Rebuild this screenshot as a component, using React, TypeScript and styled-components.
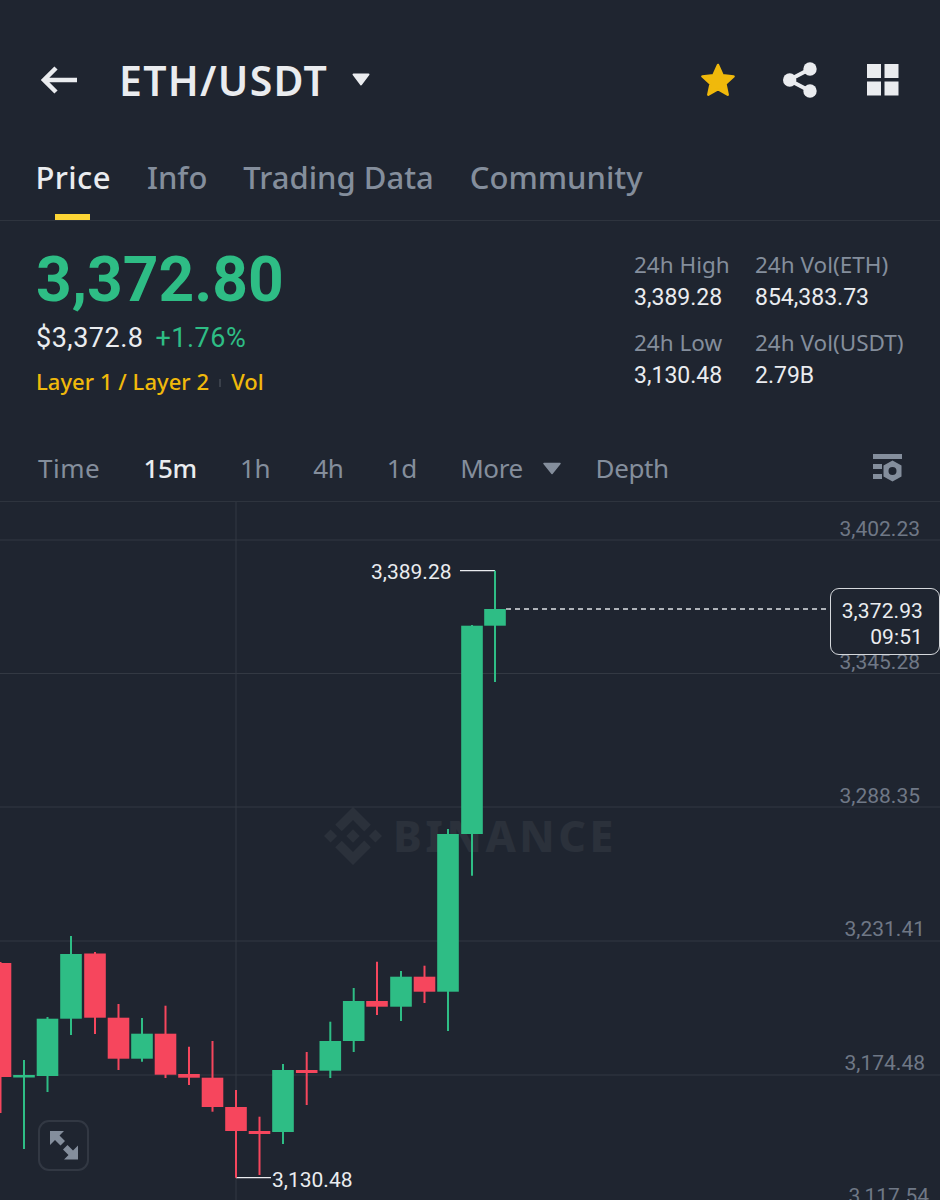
import React from 'react'
import styled, { createGlobalStyle } from 'styled-components'

const BG = '#1f2530'
const GREEN = '#2ebd85'
const RED = '#f6465d'
const WHITE = '#eaecef'
const MUTED = '#848e9c'
const LINE = '#2e343e'
const GRID = '#333943'
const TEXT_FONT = `"Noto Sans", "Open Sans", sans-serif`
const NUM_FONT = `Roboto, "Noto Sans", sans-serif`

const GlobalStyle = createGlobalStyle`
  html, body {
    margin: 0;
    background: ${BG};
  }
`

const Page = styled.div`
  width: 940px;
  height: 1200px;
  overflow: hidden;
  background: ${BG};
  color: ${WHITE};
  font-family: ${TEXT_FONT};
`

const Header = styled.header`
  display: flex;
  align-items: center;
  height: 56px;
  padding: 52px 41px 0 41px;
`

const Title = styled.h1`
  margin: 0 0 0 42px;
  font-size: 41px;
  line-height: 56px;
  font-weight: 600;
  letter-spacing: 1.300px;
`

const TitleCaret = styled.svg`
  margin-left: 24px;
  width: 18px;
  height: 14px;
`

const HeaderActions = styled.div`
  display: flex;
  align-items: center;
  gap: 50px;
  margin-left: auto;
`

const ShareIcon = styled.svg`
  width: 34px;
  height: 36px;
  margin-left: -3px;
`

const Tabs = styled.nav`
  display: flex;
  gap: 36px;
  height: 68px;
  padding: 43px 36px 1px 35.500px;
  border-bottom: 1px solid ${LINE};
`

const Tab = styled.div<{ $active?: boolean }>`
  position: relative;
  font-size: 31px;
  line-height: 52px;
  font-weight: 500;
  letter-spacing: ${p => (p.$active ? '0.4px' : '0')};
  color: ${p => (p.$active ? WHITE : MUTED)};

  ${p =>
    p.$active &&
    `&::after {
      content: '';
      position: absolute;
      left: 19px;
      bottom: -1px;
      width: 35px;
      height: 6px;
      background: #fcd535;
    }`}
`

const Stats = styled.section`
  display: flex;
  justify-content: space-between;
  height: 217px;
`

const PriceBlock = styled.div`
  padding: 24px 0 0 36px;
`

const LastPrice = styled.div`
  font-family: ${NUM_FONT};
  font-size: 62.300px;
  line-height: 70px;
  font-weight: 700;
  color: ${GREEN};
`

const FiatRow = styled.div`
  display: flex;
  gap: 12px;
  margin-top: 3px;
  font-family: ${NUM_FONT};
  font-size: 27px;
  line-height: 40px;
  letter-spacing: 0.5px;
`

const Change = styled.span`
  color: ${GREEN};
`

const TagRow = styled.div`
  display: flex;
  align-items: center;
  margin-top: 5px;
  font-size: 22px;
  line-height: 36px;
  font-weight: 500;
  letter-spacing: 0.05px;
  color: #f0b90b;
`

const TagDivider = styled.span`
  width: 2px;
  height: 8px;
  margin: 4px 10px 0 10px;
  background: #3a404a;
`

const Ticker = styled.div`
  display: grid;
  grid-template-columns: 121px 185px;
  grid-auto-rows: 78px;
  align-content: start;
  padding-top: 26px;
`

const TickerCell = styled.div`
  display: flex;
  flex-direction: column;
`

const TickerLabel = styled.span`
  font-size: 22.500px;
  line-height: 35px;
  color: ${MUTED};
`

const TickerValue = styled.span`
  font-family: ${NUM_FONT};
  font-size: 23px;
  line-height: 32px;
`

const Intervals = styled.div`
  display: flex;
  align-items: center;
  gap: 43.300px;
  height: 60px;
  padding: 0 38px 3px 38px;
  border-bottom: 1px solid ${LINE};
`

const Interval = styled.span<{ $active?: boolean }>`
  font-size: 26px;
  line-height: 36px;
  font-weight: ${p => (p.$active ? 500 : 400)};
  letter-spacing: -0.4px;
  color: ${p => (p.$active ? WHITE : MUTED)};

  &:first-child {
    letter-spacing: 0.5px;
  }
`

const MoreGroup = styled.span`
  display: flex;
  align-items: center;
  gap: 20px;
  margin-right: -8.500px;
`

const MoreLabel = styled(Interval)`
  &:first-child {
    letter-spacing: -0.4px;
  }
`

const SettingsButton = styled.svg`
  width: 29px;
  height: 28px;
  margin-left: auto;
`

const Chart = styled.div`
  position: relative;
  height: 698px;
  overflow: hidden;
`

const Watermark = styled.div`
  position: absolute;
  left: 324px;
  top: 305px;
  display: flex;
  align-items: center;
  gap: 11px;
  color: #2b313b;
  font-family: ${TEXT_FONT};
  font-size: 43px;
  line-height: 58px;
  font-weight: 800;
  letter-spacing: 3.500px;
`

const Plot = styled.svg`
  position: absolute;
  inset: 0;
  width: 940px;
  height: 698px;
`

const AxisLabel = styled.span<{ $y: number; $right: number }>`
  position: absolute;
  top: ${p => p.$y}px;
  right: ${p => p.$right}px;
  font-family: ${NUM_FONT};
  font-size: 21px;
  line-height: 24px;
  color: #6f7886;
`

const ExtremeLabel = styled.span<{ $y: number; $x: number }>`
  position: absolute;
  top: ${p => p.$y}px;
  left: ${p => p.$x}px;
  font-family: ${NUM_FONT};
  font-size: 21px;
  line-height: 24px;
  color: ${WHITE};
`

const PriceTag = styled.div`
  position: absolute;
  left: 830px;
  top: 86px;
  box-sizing: border-box;
  width: 110px;
  height: 67px;
  padding: 9px 16px 0 0;
  border: 1.5px solid #d5d8dc;
  border-radius: 9px;
  background: ${BG};
  font-family: ${NUM_FONT};
  font-size: 21px;
  line-height: 26px;
  letter-spacing: 0.1px;
  text-align: right;
  color: ${WHITE};
`

const ExpandButton = styled.button`
  position: absolute;
  left: 38px;
  top: 618px;
  display: flex;
  align-items: center;
  justify-content: center;
  box-sizing: border-box;
  width: 51px;
  height: 51px;
  padding: 0;
  border: 2px solid #323843;
  border-radius: 11px;
  background: transparent;
`

type Candle = {
  x: number
  open: number
  close: number
  high: number
  low: number
  up: boolean
}

const candle = (x: number, open: number, close: number, high: number, low: number, up: boolean): Candle => ({
  x,
  open,
  close,
  high,
  low,
  up,
})

// page coordinates read off the reference
const CANDLES: Candle[] = [
  candle(0.5, 963, 1077, 962, 1113, false),
  candle(24, 1075, 1077.5, 1060, 1149, true),
  candle(47.5, 1018.7, 1076, 1017, 1092, true),
  candle(71, 954, 1018.7, 936, 1035, true),
  candle(95, 953.5, 1017.7, 952, 1034, false),
  candle(118.5, 1017.7, 1058.7, 1004, 1070, false),
  candle(142, 1033.7, 1058.7, 1018, 1061.7, true),
  candle(165.5, 1033.7, 1074.7, 1005.7, 1078, false),
  candle(189, 1074, 1077.7, 1046.7, 1085, false),
  candle(212.5, 1077.7, 1107, 1041, 1111.7, false),
  candle(236, 1107, 1131, 1090, 1177.7, false),
  candle(259.5, 1131, 1134, 1116.7, 1175, false),
  candle(283, 1070, 1132, 1064, 1144, true),
  candle(306.7, 1070, 1073, 1052, 1105, false),
  candle(330.3, 1041, 1070.7, 1021.7, 1078, true),
  candle(353.7, 1001, 1041, 988, 1052, true),
  candle(377, 1001, 1006.7, 961.7, 1015, false),
  candle(401, 976.7, 1006.7, 971, 1021, true),
  candle(424.5, 976.7, 991.7, 965.7, 1003, false),
  candle(448, 834, 991.7, 829, 1031, true),
  candle(472, 625.7, 834, 625, 875.7, true),
  candle(495, 609, 625.7, 570.7, 682, true),
]

const GRID_LINES = [540, 673.5, 807, 941, 1075]

const AXIS = [
  { value: '3,402.23', y: 529, right: 20 },
  { value: '3,345.28', y: 662, right: 20 },
  { value: '3,288.35', y: 796, right: 20 },
  { value: '3,231.41', y: 929, right: 15 },
  { value: '3,174.48', y: 1063, right: 15 },
  { value: '3,117.54', y: 1196, right: 11 },
]

const TICKER = [
  { label: '24h High', value: '3,389.28' },
  { label: '24h Vol(ETH)', value: '854,383.73' },
  { label: '24h Low', value: '3,130.48' },
  { label: '24h Vol(USDT)', value: '2.79B' },
]

const Caret = ({ color }: { color: string }) => (
  <svg width="18" height="13" viewBox="0 0 18 13" aria-hidden>
    <path d="M1 1.500h16L9 11.500z" fill={color} stroke={color} strokeWidth="1.500" strokeLinejoin="round" />
  </svg>
)

export default function App() {
  return (
    <Page>
      <GlobalStyle />
      <Header>
        <svg width="36" height="28" viewBox="0 0 36 28" aria-hidden>
          <path d="M36 14H4M15 2 3 14l12 12" fill="none" stroke={WHITE} strokeWidth="4.500" />
        </svg>
        <Title>ETH/USDT</Title>
        <TitleCaret viewBox="0 0 18 14" aria-hidden>
          <path d="M1.500 1.500h15L9 11.500z" fill={WHITE} stroke={WHITE} strokeWidth="2" strokeLinejoin="round" />
        </TitleCaret>
        <HeaderActions>
          <svg width="36" height="36" viewBox="0 0 36 36" aria-hidden>
            <path
              d="M18 3l4.600 10.200 11 1.200-8.200 7.400 2.300 10.900L18 27.200 8.300 32.700l2.300-10.900-8.200-7.400 11-1.200z"
              fill="#f0b90b"
              stroke="#f0b90b"
              strokeWidth="2.500"
              strokeLinejoin="round"
            />
          </svg>
          <ShareIcon viewBox="0 0 34 36" aria-hidden>
            <path d="M27 7 6 18l21 11" fill="none" stroke={WHITE} strokeWidth="4" />
            <circle cx="27" cy="7" r="6.700" fill={WHITE} />
            <circle cx="6.700" cy="18" r="6.700" fill={WHITE} />
            <circle cx="27" cy="29" r="6.700" fill={WHITE} />
          </ShareIcon>
          <svg width="32" height="32" viewBox="0 0 32 32" aria-hidden>
            <path d="M0 0h14v14H0zM17.500 0h14v14h-14zM0 17.500h14v14H0zM17.500 17.500h14v14h-14z" fill={WHITE} />
          </svg>
        </HeaderActions>
      </Header>

      <Tabs>
        <Tab $active>Price</Tab>
        <Tab>Info</Tab>
        <Tab>Trading Data</Tab>
        <Tab>Community</Tab>
      </Tabs>

      <Stats>
        <PriceBlock>
          <LastPrice>3,372.80</LastPrice>
          <FiatRow>
            <span>$3,372.8</span>
            <Change>+1.76%</Change>
          </FiatRow>
          <TagRow>
            Layer 1 / Layer 2
            <TagDivider />
            Vol
          </TagRow>
        </PriceBlock>
        <Ticker>
          {TICKER.map(item => (
            <TickerCell key={item.label}>
              <TickerLabel>{item.label}</TickerLabel>
              <TickerValue>{item.value}</TickerValue>
            </TickerCell>
          ))}
        </Ticker>
      </Stats>

      <Intervals>
        <Interval>Time</Interval>
        <Interval $active>15m</Interval>
        <Interval>1h</Interval>
        <Interval>4h</Interval>
        <Interval>1d</Interval>
        <MoreGroup>
          <MoreLabel>More</MoreLabel>
          <Caret color={MUTED} />
        </MoreGroup>
        <Interval>Depth</Interval>
        <SettingsButton viewBox="0 0 29 28" aria-hidden>
          <path d="M0 0h29v5H0zM0 10h9v5H0zM0 20h9v5H0z" fill={MUTED} />
          <path
            fillRule="evenodd"
            d="M19.500 6.500l9 5v11l-9 5-9-5v-11zM19.500 13a4 4 0 1 0 0 8 4 4 0 0 0 0-8z"
            fill={MUTED}
          />
        </SettingsButton>
      </Intervals>

      <Chart>
        <Watermark>
          <svg width="58" height="58" viewBox="0 0 126.610 126.610" aria-hidden>
            <path
              fill="#2b313b"
              d="M38.730 53.200l24.590-24.580 24.600 24.600 14.300-14.310L63.320 0 24.420 38.900zM0 63.310l14.300-14.310 14.310 14.310-14.310 14.300zM38.730 73.410l24.590 24.590 24.600-24.600 14.310 14.290-38.900 38.910-38.910-38.880zM98 63.310l14.300-14.310 14.310 14.300-14.310 14.320zM77.830 63.300L63.320 48.780 52.590 59.510l-1.240 1.230-2.540 2.540 14.510 14.500 14.510-14.520z"
            />
          </svg>
          BINANCE
        </Watermark>

        <Plot viewBox="0 502 940 698" aria-hidden>
          {GRID_LINES.map(y => (
            <line key={y} x1="0" x2="940" y1={y} y2={y} stroke={GRID} strokeWidth="1" />
          ))}
          <line x1="236" x2="236" y1="502" y2="1200" stroke={GRID} strokeWidth="1" />
          <path d="M460 570.700H495" stroke={WHITE} strokeWidth="1.200" />
          <path d="M236 1177.700H271" stroke={WHITE} strokeWidth="1.200" />
          <line x1="506" x2="830" y1="609" y2="609" stroke="#dfe2e6" strokeWidth="1.400" strokeDasharray="5 4" />
          {CANDLES.map(c => {
            const color = c.up ? GREEN : RED
            return (
              <g key={c.x}>
                <line x1={c.x} x2={c.x} y1={c.high} y2={c.low} stroke={color} strokeWidth="2" />
                <rect x={c.x - 10.800} y={c.open} width="21.600" height={c.close - c.open} fill={color} />
              </g>
            )
          })}
        </Plot>

        {AXIS.map(a => (
          <AxisLabel key={a.value} $y={a.y - 502 - 12} $right={a.right}>
            {a.value}
          </AxisLabel>
        ))}
        <ExtremeLabel $x={371} $y={58}>3,389.28</ExtremeLabel>
        <ExtremeLabel $x={272} $y={666}>3,130.48</ExtremeLabel>
        <PriceTag>
          3,372.93
          <br />
          09:51
        </PriceTag>
        <ExpandButton aria-label="Expand chart">
          <svg width="30" height="29" viewBox="0 0 30 29" aria-hidden>
            <path d="M1 0h14l-4.500 4.500 5.500 5.500-4.500 4.500-5.500-5.500L1 14zM29 28.500H15l4.500-4.500-5.500-5.500 4.500-4.500 5.500 5.500 5-5z" fill={MUTED} />
          </svg>
        </ExpandButton>
      </Chart>
    </Page>
  )
}
